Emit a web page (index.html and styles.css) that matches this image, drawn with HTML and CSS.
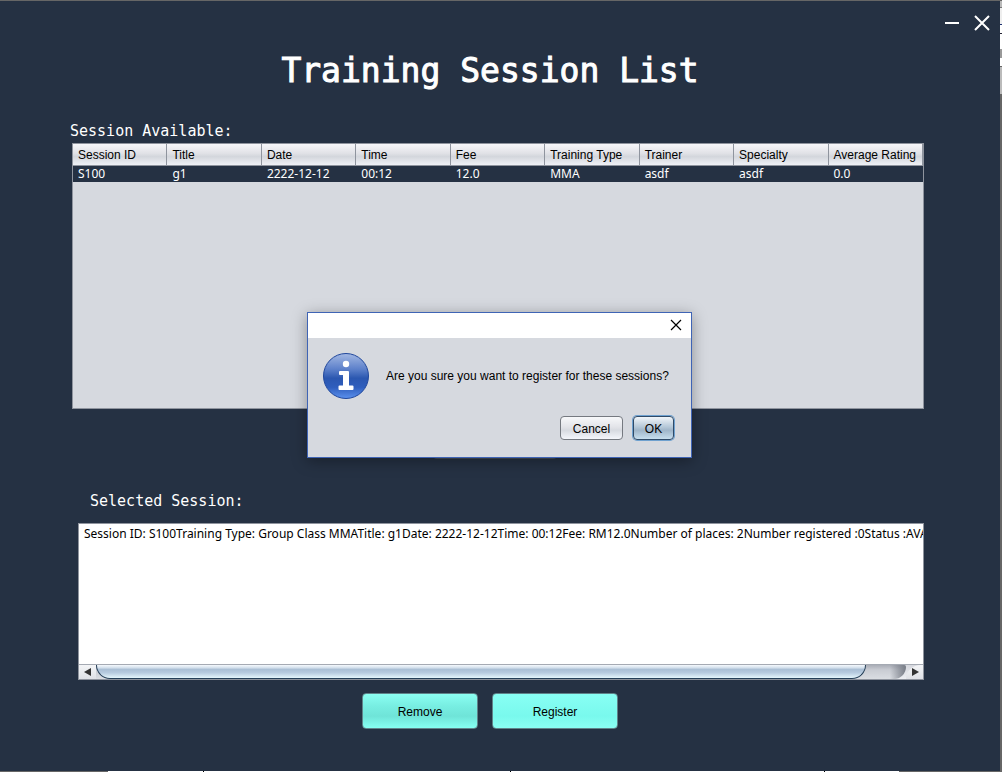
FILE: index.html
```html
<!DOCTYPE html>
<html lang="en">
<head>
<meta charset="utf-8">
<meta name="viewport" content="width=device-width, initial-scale=1">
<title>Training Session List</title>
<link rel="stylesheet" href="styles.css">
</head>
<body>
<div class="desktop">
  <main class="window">
    <div class="window-controls">
      <button class="control" type="button" aria-label="Minimize">
        <svg width="16" height="16" viewBox="0 0 16 16"><path d="M1 8h14" stroke="#fff" stroke-width="2"/></svg>
      </button>
      <button class="control" type="button" aria-label="Close">
        <svg width="16" height="16" viewBox="0 0 16 16"><path d="M1 1l14 14M15 1L1 15" stroke="#fff" stroke-width="2"/></svg>
      </button>
    </div>
    <h1 class="title">Training Session List</h1>

    <section class="available">
      <h2 class="label">Session Available:</h2>
      <div class="table-pane">
        <table class="sessions">
          <thead>
            <tr><th>Session ID</th><th>Title</th><th>Date</th><th>Time</th><th>Fee</th><th>Training Type</th><th>Trainer</th><th>Specialty</th><th>Average Rating</th></tr>
          </thead>
          <tbody>
            <tr><td>S100</td><td>g1</td><td>2222-12-12</td><td>00:12</td><td>12.0</td><td>MMA</td><td>asdf</td><td>asdf</td><td>0.0</td></tr>
          </tbody>
        </table>
      </div>
    </section>

    <div class="covered-button"></div>

    <section class="selected">
      <label class="label label-inset" for="selected">Selected Session:</label>
      <div class="text-pane">
        <textarea class="details" id="selected" readonly wrap="off">Session ID: S100Training Type: Group Class MMATitle: g1Date: 2222-12-12Time: 00:12Fee: RM12.0Number of places: 2Number registered :0Status :AVAILABLE</textarea>
        <div class="scrollbar">
          <button class="scroll-button" type="button" aria-label="Scroll left">
            <svg width="8" height="8" viewBox="0 0 8 8"><path d="M0 4l7-4v8z" fill="#333"/></svg>
          </button>
          <div class="track"><div class="thumb"></div></div>
          <button class="scroll-button scroll-button-end" type="button" aria-label="Scroll right">
            <svg width="8" height="8" viewBox="0 0 8 8"><path d="M8 4L1 0v8z" fill="#333"/></svg>
          </button>
        </div>
      </div>
    </section>

    <div class="actions">
      <button class="action action-remove" type="button">Remove</button>
      <button class="action action-register" type="button">Register</button>
    </div>
  </main>

  <div class="dialog" role="dialog" aria-describedby="question">
    <div class="dialog-bar">
      <button class="control" type="button" aria-label="Close dialog">
        <svg width="12" height="12" viewBox="0 0 12 12"><path d="M1 1l10 10M11 1L1 11" stroke="#000" stroke-width="1.2"/></svg>
      </button>
    </div>
    <div class="dialog-body">
      <svg width="48" height="48" viewBox="0 0 48 48" aria-hidden="true">
        <defs><linearGradient id="ball" x1="0" y1="0" x2="0" y2="1"><stop offset="0" stop-color="#a3b8e3"/><stop offset=".35" stop-color="#5c80ca"/><stop offset=".55" stop-color="#2b57b0"/><stop offset=".75" stop-color="#2f5ebd"/><stop offset="1" stop-color="#5b91ee"/></linearGradient></defs>
        <circle cx="24" cy="24" r="22.5" fill="url(#ball)" stroke="#20479c"/>
        <circle cx="24" cy="12" r="3.2" fill="#fff"/>
        <path d="M18 19h8q1 0 1 1v13.500h3.500q1 0 1 1v2.500q0 1-1 1h-13q-1 0-1-1v-2.500q0-1 1-1H21V23h-3q-1 0-1-1v-2q0-1 1-1z" fill="#fff"/>
      </svg>
      <p class="question" id="question">Are you sure you want to register for these sessions?</p>
    </div>
    <div class="dialog-actions">
      <button class="choice" type="button">Cancel</button>
      <button class="choice choice-default" type="button">OK</button>
    </div>
  </div>
  <div class="edge-right"></div>
  <div class="edge-bottom"></div>
</div>
</body>
</html>
```
FILE: styles.css
```css
* { box-sizing: border-box; }
body {
  margin: 0;
  font-family: "Liberation Sans", sans-serif;
  font-size: 12px;
  color: #000;
}
button { font: inherit; color: inherit; cursor: pointer; }
.desktop {
  position: relative;
  display: grid;
  grid-template-columns: 1fr 2px;
  grid-template-rows: 1fr 1px;
  min-height: 100vh;
}
.window {
  display: flex;
  flex-direction: column;
  background: #253143;
  border-top: 1px solid #666;
  padding-bottom: 42px;
}
.edge-right {
  grid-column: 2;
  grid-row: 1;
  background: linear-gradient(#666 0 1px, #bbb 1px 7px, #777 7px 8px, #eee 8px 24px, #1d3170 24px 25px, #fff 25px 33px, #223 33px 34px, #fff 34px 49px, #999 49px 58px, #fff 58px 66px, #666 66px 67px, #bbb 67px 94px, #666 94px);
}
.edge-bottom {
  grid-column: 1 / 3;
  grid-row: 2;
  background: linear-gradient(90deg, #666 0 108px, #fff 108px 203px, #000 203px 204px, #fff 204px 510px, #000 510px 511px, #fff 511px 824px, #000 824px 825px, #fff 825px 899px, #666 899px);
}
.window-controls {
  display: flex;
  justify-content: flex-end;
  gap: 14px;
  padding: 14px 10px 0;
}
.control {
  display: block;
  padding: 0;
  border: 0;
  background: none;
}
.control svg { display: block; }
.title {
  margin: 20px 0 0;
  padding-right: 20px;
  font: 33px/40px "DejaVu Sans Mono", monospace;
  color: #fff;
  text-align: center;
  -webkit-text-stroke: 1px #fff;
}
.label {
  display: block;
  margin: 0;
  font: 15px/20px "DejaVu Sans Mono", monospace;
  color: #fff;
}
.available { padding: 30px 76px 0 70px; }
.table-pane {
  height: 266px;
  margin: 2px 0 0 2px;
  border: 1px solid #8f949e;
  background: #d6d9df;
}
.sessions {
  width: 100%;
  table-layout: fixed;
  border-collapse: separate;
  border-spacing: 0;
  text-align: left;
}
.sessions th {
  height: 22px;
  padding: 0 0 0 5px;
  border-right: 1px solid #8f949e;
  border-bottom: 1px solid #8f949e;
  background: linear-gradient(#f7f7fa, #e0e1e6 45%, #d3d6dc 60%, #eff1f6);
  font-weight: 400;
  line-height: 16px;
  white-space: nowrap;
}
.sessions td {
  height: 16px;
  padding: 0 0 0 5px;
  background: #253143;
  color: #fff;
  font-family: "Noto Sans", sans-serif;
  line-height: 16px;
}
.covered-button {
  align-self: center;
  width: 124px;
  height: 35px;
  margin: 15px 10px 0 0;
  border-radius: 4px;
  background: #454d59;
}
.selected { padding: 32px 76px 0 78px; }
.label-inset { padding-left: 12px; }
.text-pane {
  height: 157px;
  display: flex;
  flex-direction: column;
  margin-top: 12px;
  border: 1px solid #8f949e;
  background: #fff;
}
.details {
  flex: 1;
  width: 100%;
  min-height: 0;
  padding: 2px 0 0 5px;
  border: 0;
  outline: 0;
  resize: none;
  overflow: hidden;
  white-space: pre;
  background: #fff;
  color: #000;
  font: 12px/16px "Noto Sans", sans-serif;
}
.scrollbar {
  display: flex;
  height: 15px;
  border-top: 1px solid #a5aab3;
  background: linear-gradient(#d5d7dd, #eceef2);
}
.scroll-button {
  display: flex;
  align-items: center;
  justify-content: center;
  width: 17px;
  padding: 0;
  border: 0;
  background: linear-gradient(#f4f5f7, #dfe1e6);
}
.scroll-button-end { border-top-left-radius: 16px 15px; }
.track {
  flex: 1;
  border-top-right-radius: 2px;
  border-bottom-right-radius: 14px 14px;
  background: linear-gradient(90deg, transparent 98%, #777c86), linear-gradient(#a9adb6, #c9ccd3 35%, #dadde2);
}
.thumb {
  width: 95%;
  height: 14px;
  border: 1px solid #253f58;
  border-top: 0;
  border-radius: 0 0 16px 16px;
  background: linear-gradient(#f5f9fd, #d5e1ed 20%, #aabfd5 35%, #b7cbdf 60%, #e5f6fc);
}
.actions {
  display: flex;
  justify-content: center;
  gap: 14px;
  padding: 13px 20px 0 0;
}
.action {
  height: 36px;
  padding: 1px 0 0;
  border: 1px solid #5f8389;
  border-radius: 4px;
}
.action-remove {
  width: 116px;
  background: linear-gradient(#8bfff2, #78eee2 35%, #6fe4d8 65%, #86fff2);
}
.action-register {
  width: 126px;
  background: linear-gradient(#88fff4, #79f9ed 65%, #8afff4);
}
.dialog {
  position: absolute;
  top: 312px;
  left: calc(50% - 194px);
  width: 385px;
  border: 1px solid #3f64b5;
  background: #d6d9df;
  box-shadow: 0 3px 14px rgba(0, 0, 0, .35);
}
.dialog-bar {
  display: flex;
  align-items: center;
  justify-content: flex-end;
  height: 25px;
  padding: 0 9px 1px 0;
  background: #fff;
}
.dialog-body {
  display: flex;
  align-items: center;
  gap: 16px;
  padding: 14px 10px 0 14px;
}
.question { margin: 0; white-space: nowrap; }
.dialog-actions {
  display: flex;
  justify-content: flex-end;
  gap: 10px;
  padding: 16px 17px 17px 0;
}
.choice {
  width: 63px;
  height: 24px;
  padding: 1px 0 0;
  border: 1px solid #757980;
  border-radius: 4px;
  background: linear-gradient(#f7f8fa, #e3e4e9 45%, #d7dae0 60%, #f4f6fb);
}
.choice-default {
  width: 41px;
  border-color: #2f4a68;
  background: linear-gradient(#f1f5f9, #b5c8d8 45%, #9fb5c9 60%, #c7deee);
  box-shadow: 0 0 0 1px #6fa1cf;
}
```
